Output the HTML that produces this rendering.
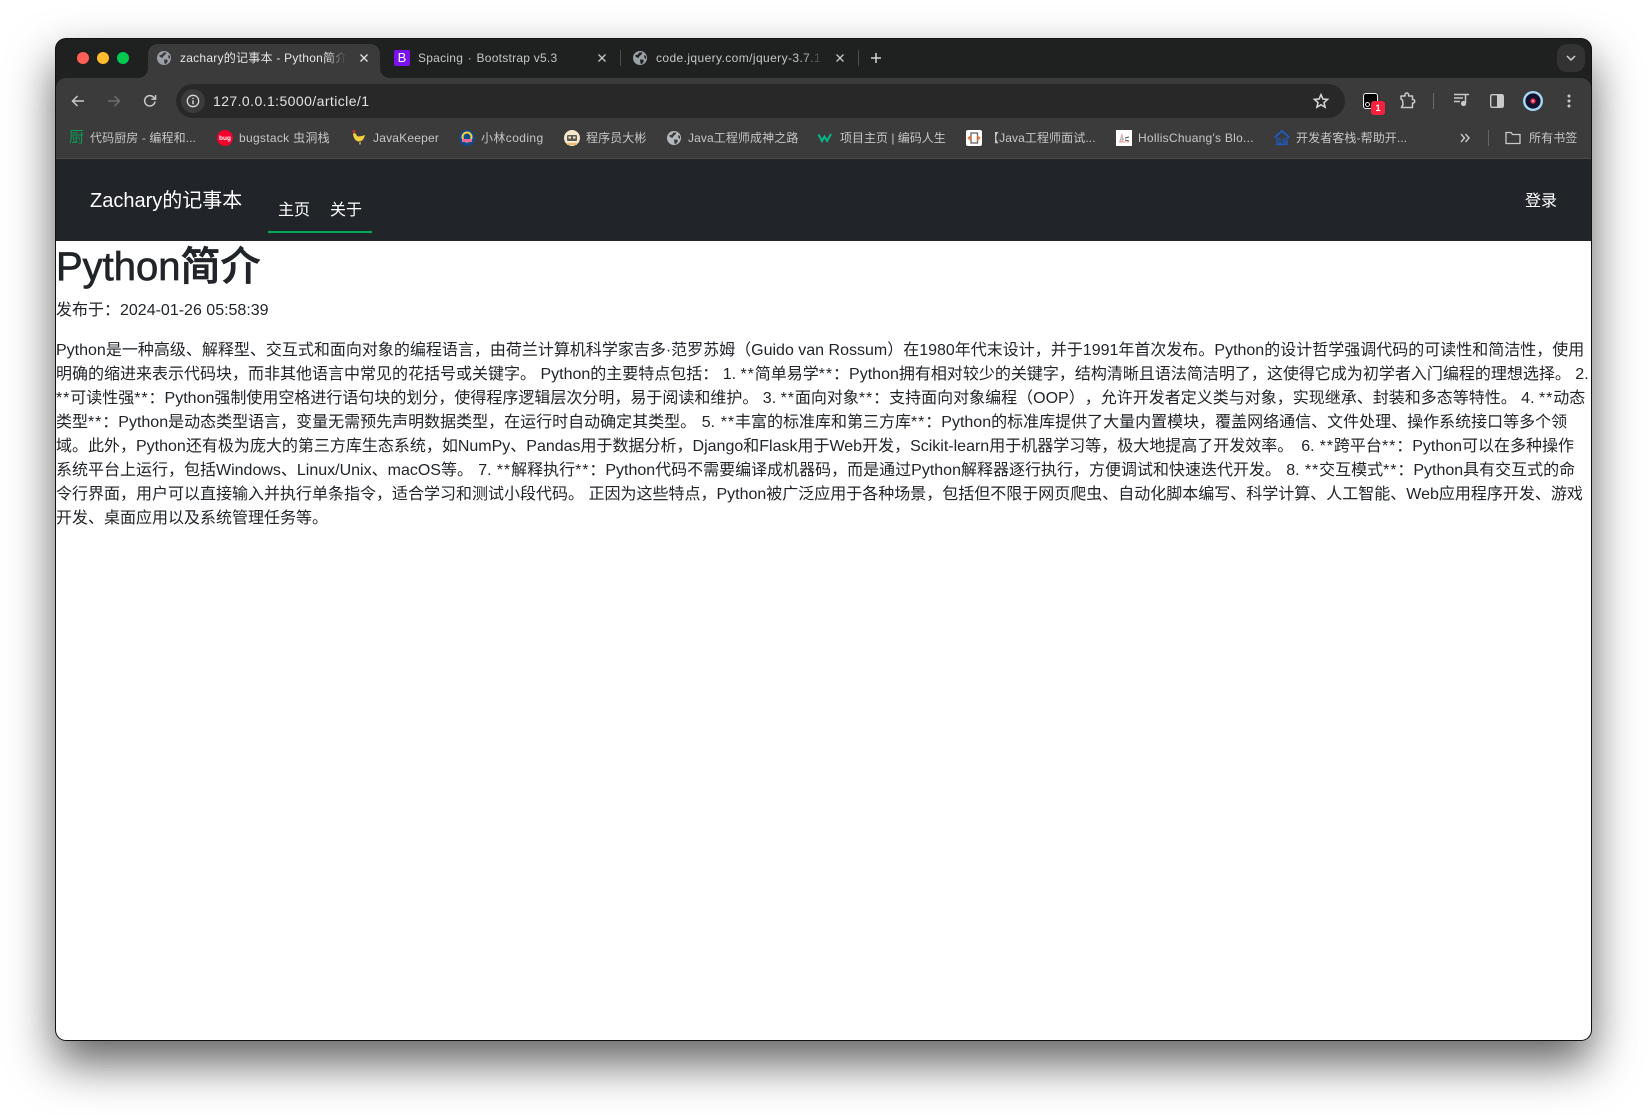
<!DOCTYPE html>
<html lang="zh"><head><meta charset="utf-8"><title>Python简介</title>
<style>
*{box-sizing:border-box}
html,body{margin:0;padding:0;width:1647px;height:1114px;overflow:hidden;background:#fff;font-family:"Liberation Sans","Noto Sans CJK SC",sans-serif}
.abs,.t,.b,svg.i{position:absolute}
#win{position:absolute;left:55px;top:38px;width:1537px;height:1003px;border-radius:11px;box-shadow:0 22px 46px rgba(0,0,0,.62);background:#111}
.t{font-size:12px;line-height:16px;white-space:nowrap;top:50px;color:#c4c7c5}
.b{font-size:12px;line-height:16px;white-space:nowrap;top:130px;color:#c6c6c6;letter-spacing:.1px}
.fade{position:absolute;top:46px;height:24px}
.line{position:absolute;left:56px;white-space:nowrap;font-size:16px;line-height:24px;color:#212529;text-spacing-trim:space-all}
.line i{font-style:normal;letter-spacing:.9px}
svg.i{overflow:visible}
</style></head><body>
<div id="win"></div>
<!-- frame -->
<div class="abs" style="left:56px;top:39px;width:1535px;height:202px;background:#1f2120;border-radius:10px 10px 0 0"></div>
<div class="abs" style="left:56px;top:78px;width:1535px;height:81px;background:#3b3b3b;border-radius:10px 10px 0 0"></div>
<div class="abs" style="left:56px;top:158px;width:1535px;height:1px;background:#4a4a4a"></div>
<!-- active tab -->
<div class="abs" style="left:148px;top:44px;width:232px;height:34px;background:#3b3b3b;border-radius:10px 10px 0 0"></div>
<svg class="i" style="left:138px;top:68px" width="10" height="10"><path d="M10 0V10H0A10 10 0 0 0 10 0Z" fill="#3b3b3b"/></svg>
<svg class="i" style="left:380px;top:68px" width="10" height="10"><path d="M0 0V10H10A10 10 0 0 1 0 0Z" fill="#3b3b3b"/></svg>
<!-- traffic -->
<svg class="i" style="left:76px;top:51px" width="54" height="14"><circle cx="7" cy="7" r="6" fill="#ff5f57"/><circle cx="27" cy="7" r="6" fill="#febc2e"/><circle cx="47" cy="7" r="6" fill="#02c94f"/></svg>
<!-- tab 1 -->
<svg class="i" style="left:157px;top:51px" width="14" height="14" viewBox="0 0 14 14"><circle cx="7" cy="7" r="7" fill="#9aa0a6"/><path d="M2 4.500 5 3.500 6.500 1.500 9.500 1.500 8.500 3.500 6.500 5 5.500 7 3 6ZM7 8.500 10 8.500 11 10 9 13 7.500 12.500ZM11 4 13 5 13 8 11.500 7Z" fill="#3b3b3b"/></svg>
<div class="t" style="left:180px;width:168px;overflow:hidden;color:#e6e6e6;letter-spacing:.25px">zachary的记事本 - Python简介</div>
<div class="fade" style="left:326px;width:24px;background:linear-gradient(90deg,rgba(59,59,59,0),#3b3b3b 85%)"></div>
<svg class="i" style="left:360px;top:54px" width="8" height="8"><path d="M.5 .5 7.500 7.500M7.500 .5 .5 7.500" stroke="#e2e2e2" stroke-width="1.300"/></svg>
<!-- tab 2 -->
<div class="abs" style="left:394px;top:50px;width:16px;height:16px;background:#7a11ee;border-radius:2px;color:#fff;font-size:13px;line-height:16px;text-align:center">B</div>
<div class="t" style="left:418px;letter-spacing:.25px">Spacing<span style="margin:0 1px"> · </span>Bootstrap v5.3</div>
<svg class="i" style="left:598px;top:54px" width="8" height="8"><path d="M.5 .5 7.500 7.500M7.500 .5 .5 7.500" stroke="#c4c7c5" stroke-width="1.300"/></svg>
<div class="abs" style="left:620px;top:50px;width:1px;height:16px;background:#4d4d4d"></div>
<!-- tab 3 -->
<svg class="i" style="left:633px;top:51px" width="14" height="14" viewBox="0 0 14 14"><circle cx="7" cy="7" r="7" fill="#9aa0a6"/><path d="M2 4.500 5 3.500 6.500 1.500 9.500 1.500 8.500 3.500 6.500 5 5.500 7 3 6ZM7 8.500 10 8.500 11 10 9 13 7.500 12.500ZM11 4 13 5 13 8 11.500 7Z" fill="#1f2120"/></svg>
<div class="t" style="left:656px;width:168px;overflow:hidden;letter-spacing:.4px">code.jquery.com/jquery-3.7.1.min.js</div>
<div class="fade" style="left:804px;width:22px;background:linear-gradient(90deg,rgba(31,33,32,0),#1f2120 85%)"></div>
<svg class="i" style="left:836px;top:54px" width="8" height="8"><path d="M.5 .5 7.500 7.500M7.500 .5 .5 7.500" stroke="#c4c7c5" stroke-width="1.300"/></svg>
<div class="abs" style="left:858px;top:50px;width:1px;height:16px;background:#4d4d4d"></div>
<svg class="i" style="left:871px;top:53px" width="10" height="10"><path d="M5 0V10M0 5H10" stroke="#d6d6d6" stroke-width="1.500"/></svg>
<div class="abs" style="left:1557px;top:44px;width:28px;height:28px;background:#333;border-radius:10px"></div>
<svg class="i" style="left:1566px;top:55px" width="10" height="7"><path d="M1 1 5 5 9 1" fill="none" stroke="#d0d0d0" stroke-width="1.500"/></svg>
<!-- toolbar nav -->
<svg class="i" style="left:71px;top:95px" width="14" height="12" fill="none" stroke="#c9c9c9" stroke-width="1.500"><path d="M13 6H1.500M6.500 1 1.500 6 6.500 11"/></svg>
<svg class="i" style="left:107px;top:95px" width="14" height="12" fill="none" stroke="#6e6e6e" stroke-width="1.500"><path d="M1 6H12.500M7.500 1 12.500 6 7.500 11"/></svg>
<svg class="i" style="left:143px;top:94px" width="14" height="14" viewBox="0 0 14 14" fill="none" stroke="#c9c9c9" stroke-width="1.500"><path d="M12 7.500A5.200 5.200 0 1 1 10.600 3.200L12.500 5"/><path d="M12.600 1V5.200H8.400" stroke-width="1.400"/></svg>
<div class="abs" style="left:176px;top:84px;width:1169px;height:34px;background:#282828;border-radius:17px"></div>
<div class="abs" style="left:181px;top:89px;width:24px;height:24px;background:#3b3b3b;border-radius:12px"></div>
<svg class="i" style="left:186px;top:94px" width="14" height="14" viewBox="0 0 14 14"><circle cx="7" cy="7" r="5.700" fill="none" stroke="#d8d8d8" stroke-width="1.300"/><path d="M7 6.200V10.200M7 3.800V5" stroke="#d8d8d8" stroke-width="1.400"/></svg>
<div class="abs" style="left:213px;top:92px;font-size:14px;line-height:18px;color:#e3e3e3;white-space:nowrap;letter-spacing:.42px">127.0.0.1:5000/article/1</div>
<svg class="i" style="left:1313px;top:93px" width="16" height="16" viewBox="0 0 16 16"><path d="M8 1.600 9.900 6 14.600 6.400 11 9.500 12.100 14.200 8 11.700 3.900 14.200 5 9.500 1.400 6.400 6.100 6Z" fill="none" stroke="#d8d8d8" stroke-width="1.500"/></svg>
<!-- ext icons -->
<div class="abs" style="left:1363px;top:93px;width:15px;height:16px;background:#000;border:1px solid #eee;border-radius:3px"></div>
<div class="abs" style="left:1365px;top:102px;width:5px;height:5px;border:1px solid #ddd;border-radius:50%"></div>
<div class="abs" style="left:1371px;top:101px;width:14px;height:14px;background:#f5223f;border-radius:3px;color:#fff;font:700 9px/14px 'Liberation Sans',sans-serif;text-align:center">1</div>
<svg class="i" style="left:1399px;top:92px" width="17" height="18" viewBox="0 0 17 18"><path d="M2 4H6V2.800A1.800 1.800 0 0 1 9.600 2.800V4H13.500V7.600H14.500A1.800 1.800 0 0 1 14.500 11H13.500V15.500H2.500L4 12.500 3.500 8 2 7Z" fill="none" stroke="#c9c9c9" stroke-width="1.500" stroke-linejoin="round"/></svg>
<div class="abs" style="left:1433px;top:93px;width:1px;height:16px;background:#6a6a6a"></div>
<svg class="i" style="left:1454px;top:93px" width="16" height="15" viewBox="0 0 16 15"><path d="M0 1.500H11M0 5H9M0 8.500H6" stroke="#c9c9c9" stroke-width="1.400"/><path d="M11.500 10V1.500H15" fill="none" stroke="#c9c9c9" stroke-width="1.500"/><circle cx="9.500" cy="10.500" r="2.600" fill="#c9c9c9"/></svg>
<svg class="i" style="left:1490px;top:94px" width="14" height="14" viewBox="0 0 14 14"><rect x=".7" y=".7" width="12.600" height="12.600" rx="1.500" fill="none" stroke="#c9c9c9" stroke-width="1.400"/><rect x="7" y="1" width="6" height="12" fill="#c9c9c9"/></svg>
<svg class="i" style="left:1523px;top:91px" width="20" height="20" viewBox="0 0 20 20"><circle cx="10" cy="10" r="10" fill="#a8d8f5"/><circle cx="10" cy="10" r="7.600" fill="#12122e"/><circle cx="10" cy="10" r="2.600" fill="#f0325a"/><circle cx="10" cy="10" r="1" fill="#ffb0a0"/></svg>
<svg class="i" style="left:1567px;top:94px" width="4" height="14"><circle cx="2" cy="2" r="1.500" fill="#c9c9c9"/><circle cx="2" cy="7" r="1.500" fill="#c9c9c9"/><circle cx="2" cy="12" r="1.500" fill="#c9c9c9"/></svg>
<!-- bookmarks -->
<div class="abs" style="left:69px;top:129px;font-size:15px;line-height:18px;color:#0a9a58">厨</div>
<div class="b" style="left:90px">代码厨房 - 编程和...</div>
<svg class="i" style="left:217px;top:130px" width="16" height="16"><circle cx="8" cy="8" r="8" fill="#f5002c"/><text x="8" y="10.200" text-anchor="middle" font-size="6.500" font-weight="700" fill="#fff" font-family="Liberation Sans">bug</text></svg>
<div class="b" style="left:239px;letter-spacing:.3px">bugstack 虫洞栈</div>
<svg class="i" style="left:351px;top:129px" width="16" height="16" viewBox="0 0 16 16"><path d="M2 5C4 3 5 5 6 7 8 8 11 7 14 6 13 10 11 12.500 8 12.500 4.500 12.500 2.500 9 2 5Z" fill="#f4cf3c"/><circle cx="3" cy="2.500" r="1.500" fill="#c8302e"/><path d="M9 13V15.500" stroke="#d9a860" stroke-width="1.500"/></svg>
<div class="b" style="left:373px;letter-spacing:.2px">JavaKeeper</div>
<svg class="i" style="left:459px;top:130px" width="16" height="16" viewBox="0 0 16 16"><circle cx="8" cy="8" r="8" fill="#124a8c"/><circle cx="8" cy="7" r="4.500" fill="none" stroke="#f3d03e" stroke-width="2"/><rect x="3" y="9" width="10" height="3" fill="#e96a9a"/></svg>
<div class="b" style="left:481px;letter-spacing:.4px">小林coding</div>
<svg class="i" style="left:564px;top:130px" width="16" height="16" viewBox="0 0 16 16"><circle cx="8" cy="8" r="8" fill="#f6e8cd"/><rect x="3" y="5" width="10" height="6" rx="1" fill="#5a5a52"/><rect x="4.500" y="6.500" width="2.500" height="2" fill="#f6e8cd"/><rect x="9" y="6.500" width="2.500" height="2" fill="#f6e8cd"/><rect x="3" y="13" width="10" height="2" fill="#f0b96a"/></svg>
<div class="b" style="left:586px">程序员大彬</div>
<svg class="i" style="left:667px;top:131px" width="14" height="14" viewBox="0 0 14 14"><circle cx="7" cy="7" r="7" fill="#b4b8bc"/><path d="M2 4.500 5 3.500 6.500 1.500 9.500 1.500 8.500 3.500 6.500 5 5.500 7 3 6ZM7 8.500 10 8.500 11 10 9 13 7.500 12.500ZM11 4 13 5 13 8 11.500 7Z" fill="#3b3b3b"/></svg>
<div class="b" style="left:688px">Java工程师成神之路</div>
<svg class="i" style="left:818px;top:133px" width="14" height="10" viewBox="0 0 14 10"><path d="M.5 1.500 4 8 6.500 3.500 9 8 13 1" fill="none" stroke="#06b78c" stroke-width="2"/></svg>
<div class="b" style="left:840px;letter-spacing:0">项目主页 | 编码人生</div>
<svg class="i" style="left:966px;top:130px" width="16" height="16" viewBox="0 0 16 16"><rect width="16" height="16" rx="2" fill="#fff"/><rect x="5" y="3" width="6.500" height="10" fill="none" stroke="#666" stroke-width="1.300"/><path d="M5 6 2.500 8 5 10M11 6 13.500 8 11 10" fill="none" stroke="#f07028" stroke-width="1.500"/></svg>
<div class="b" style="left:987px">【Java工程师面试...</div>
<svg class="i" style="left:1116px;top:130px" width="16" height="16" viewBox="0 0 16 16"><rect width="16" height="16" fill="#fff"/><path d="M4 11 6 4 7 11ZM3 12H13" fill="none" stroke="#e7a8a8"/><path d="M9 8 13 7M9 10 13 11" stroke="#555"/><path d="M5 9H8" stroke="#8fc8d8" stroke-width="1.500"/></svg>
<div class="b" style="left:1138px;letter-spacing:.26px">HollisChuang's Blo...</div>
<svg class="i" style="left:1274px;top:130px" width="16" height="16" viewBox="0 0 16 16"><path d="M.5 7.500 8 1 15.500 7.500" fill="none" stroke="#1c5cc4" stroke-width="1.800"/><path d="M3 7V14.500H13V7" fill="none" stroke="#1c5cc4" stroke-width="1.200"/><text x="8" y="14" text-anchor="middle" font-size="8" font-weight="700" fill="#1c5cc4" font-family="Liberation Sans">16</text></svg>
<div class="b" style="left:1296px">开发者客栈-帮助开...</div>
<svg class="i" style="left:1460px;top:133px" width="10" height="10" viewBox="0 0 10 10" fill="none" stroke="#c9c9c9" stroke-width="1.400"><path d="M1 1 4.500 5 1 9M5.500 1 9 5 5.500 9"/></svg>
<div class="abs" style="left:1488px;top:130px;width:1px;height:16px;background:#666"></div>
<svg class="i" style="left:1505px;top:131px" width="16" height="14" viewBox="0 0 16 14"><path d="M1 12.500V1.500H6L7.500 3.500H15V12.500Z" fill="none" stroke="#c9c9c9" stroke-width="1.300"/></svg>
<div class="b" style="left:1529px">所有书签</div>
<!-- navbar -->
<div class="abs" style="left:56px;top:159px;width:1535px;height:82px;background:#212529"></div>
<div class="abs" style="left:90px;top:186px;font-size:20px;line-height:30px;color:#fff;white-space:nowrap">Zachary的记事本</div>
<div class="abs" style="left:278px;top:199px;font-size:16px;line-height:24px;color:#fff;white-space:nowrap">主页</div>
<div class="abs" style="left:330px;top:199px;font-size:16px;line-height:24px;color:#fff;white-space:nowrap">关于</div>
<div class="abs" style="left:268px;top:231px;width:104px;height:2px;background:#08a85c"></div>
<div class="abs" style="left:1525px;top:190px;font-size:16px;line-height:24px;color:#fff;white-space:nowrap">登录</div>
<!-- content -->
<div class="abs" style="left:56px;top:241px;width:1535px;height:799px;background:#fff;border-radius:0 0 10px 10px"></div>
<div class="abs" style="left:56px;top:243px;font-size:40px;line-height:48px;font-weight:500;color:#212529;white-space:nowrap;-webkit-text-stroke:.7px #212529">Python简介</div>
<div class="line" style="top:299px">发布于：2024-01-26 05:58:39</div>
<div class="line" style="top:339px">Python是一种高级、解释型、交互式和面向对象的编程语言，由荷兰计算机科学家吉多·范罗苏姆（Guido van Rossum）在1980年代末设计，并于1991年首次发布。Python的设计哲学强调代码的可读性和简洁性，使用</div>
<div class="line" style="top:363px">明确的缩进来表示代码块，而非其他语言中常见的花括号或关键字。 Python的主要特点包括： 1. <i>**</i>简单易学<i>**</i>：Python拥有相对较少的关键字，结构清晰且语法简洁明了，这使得它成为初学者入门编程的理想选择。 2.</div>
<div class="line" style="top:387px"><i>**</i>可读性强<i>**</i>：Python强制使用空格进行语句块的划分，使得程序逻辑层次分明，易于阅读和维护。 3. <i>**</i>面向对象<i>**</i>：支持面向对象编程（OOP），允许开发者定义类与对象，实现继承、封装和多态等特性。 4. <i>**</i>动态</div>
<div class="line" style="top:411px;word-spacing:1.2px">类型<i>**</i>：Python是动态类型语言，变量无需预先声明数据类型，在运行时自动确定其类型。 5. <i>**</i>丰富的标准库和第三方库<i>**</i>：Python的标准库提供了大量内置模块，覆盖网络通信、文件处理、操作系统接口等多个领</div>
<div class="line" style="top:435px;word-spacing:.6px">域。此外，Python还有极为庞大的第三方库生态系统，如NumPy、Pandas用于数据分析，Django和Flask用于Web开发，Scikit-learn用于机器学习等，极大地提高了开发效率。<span style="letter-spacing:3px"> </span>6. <i>**</i>跨平台<i>**</i>：Python可以在多种操作</div>
<div class="line" style="top:459px;word-spacing:.8px">系统平台上运行，包括Windows、Linux/Unix、macOS等。 7. <i>**</i>解释执行<i>**</i>：Python代码不需要编译成机器码，而是通过Python解释器逐行执行，方便调试和快速迭代开发。 8. <i>**</i>交互模式<i>**</i>：Python具有交互式的命</div>
<div class="line" style="top:483px">令行界面，用户可以直接输入并执行单条指令，适合学习和测试小段代码。 正因为这些特点，Python被广泛应用于各种场景，包括但不限于网页爬虫、自动化脚本编写、科学计算、人工智能、Web应用程序开发、游戏</div>
<div class="line" style="top:507px">开发、桌面应用以及系统管理任务等。</div>
</body></html>
